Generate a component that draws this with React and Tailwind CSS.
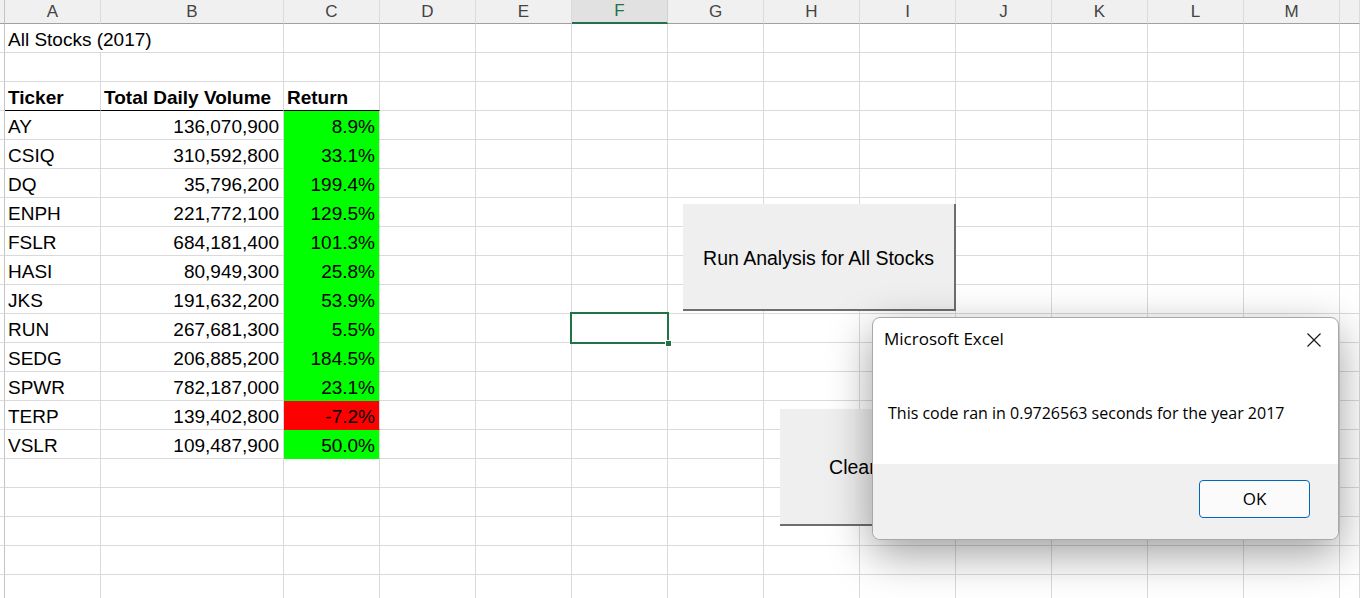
import React from 'react';

const COLS = ['A', 'B', 'C', 'D', 'E', 'F', 'G', 'H', 'I', 'J', 'K', 'L', 'M', ''];

const STOCKS = [
  ['AY', '136,070,900', '8.9%'],
  ['CSIQ', '310,592,800', '33.1%'],
  ['DQ', '35,796,200', '199.4%'],
  ['ENPH', '221,772,100', '129.5%'],
  ['FSLR', '684,181,400', '101.3%'],
  ['HASI', '80,949,300', '25.8%'],
  ['JKS', '191,632,200', '53.9%'],
  ['RUN', '267,681,300', '5.5%'],
  ['SEDG', '206,885,200', '184.5%'],
  ['SPWR', '782,187,000', '23.1%'],
  ['TERP', '139,402,800', '-7.2%'],
  ['VSLR', '109,487,900', '50.0%'],
];

// rows 1..20 of the sheet
const ROWS = [
  { kind: 'title', a: 'All Stocks (2017)' },
  { kind: 'empty' },
  { kind: 'head', a: 'Ticker', b: 'Total Daily Volume', c: 'Return' },
  ...STOCKS.map(([a, b, c]) => ({ kind: c.startsWith('-') ? 'neg' : 'pos', a, b, c })),
  { kind: 'empty' },
  { kind: 'empty' },
  { kind: 'empty' },
  { kind: 'empty' },
  { kind: 'empty' },
];

const grid = 'border-r border-b border-[#dadada]';

function HeaderRow() {
  return (
    <>
      <div className="h-[24px] border-r border-b border-r-[#c4c4c4] border-b-[#a0a0a0] bg-[#f0f0f0]" />
      {COLS.map((c, i) =>
        c === 'F' ? (
          <div
            key={i}
            className="h-[24px] flex items-center justify-center border-r border-r-[#d0d0d0] border-b-2 border-b-[#217346] bg-[#e1e1e1] text-[#217346] text-[17px]"
          >
            {c}
          </div>
        ) : (
          <div
            key={i}
            className="h-[24px] flex items-center justify-center border-r border-b border-r-[#dcdcdc] border-b-[#a0a0a0] bg-[#f0f0f0] text-[#444444] text-[17px]"
          >
            {c}
          </div>
        )
      )}
    </>
  );
}

function SheetRow({ row }) {
  const { kind, a, b, c } = row;

  let cellA = `h-[29px] px-[3px] pt-[4px] flex items-center whitespace-nowrap ${grid}`;
  let cellB = `h-[29px] px-[4px] pt-[4px] flex items-center justify-end whitespace-nowrap ${grid}`;
  let cellC = `h-[29px] px-[4px] pt-[4px] flex items-center justify-end whitespace-nowrap ${grid}`;

  if (kind === 'title') {
    cellA = 'h-[29px] px-[3px] pt-[4px] flex items-center whitespace-nowrap overflow-visible relative z-10 border-b border-[#dadada]';
  }
  if (kind === 'head') {
    cellA = 'h-[29px] px-[3px] pt-[4px] flex items-center whitespace-nowrap font-bold border-r border-r-[#dadada] border-b border-b-black';
    cellB = 'h-[29px] px-[3px] pt-[4px] flex items-center whitespace-nowrap font-bold border-r border-r-[#dadada] border-b border-b-black';
    cellC = 'h-[29px] px-[3px] pt-[4px] flex items-center whitespace-nowrap font-bold border-r border-r-[#dadada] border-b border-b-black';
  }
  if (kind === 'pos') {
    cellC = 'h-[29px] px-[4px] pt-[4px] flex items-center justify-end bg-[#00ff00] border-r border-r-[#dadada] border-b border-b-[#00ff00]';
  }
  if (kind === 'neg') {
    cellC = 'h-[29px] px-[4px] pt-[4px] flex items-center justify-end bg-[#ff0000] border-r border-r-[#dadada] border-b border-b-[#ff0000]';
  }

  return (
    <>
      <div className="h-[29px] border-r border-b border-r-[#c4c4c4] border-b-[#dadada]" />
      <div className={cellA}>{a}</div>
      <div className={cellB}>{b}</div>
      <div className={cellC}>{c}</div>
      {Array.from({ length: 11 }).map((_, i) => (
        <div key={i} className={`h-[29px] ${grid}`} />
      ))}
    </>
  );
}

const CloseIcon = () => (
  <svg width="16" height="16" viewBox="0 0 16 16" fill="none" stroke="#1a1a1a" strokeWidth="1.2">
    <path d="M1.5 1.5 L14.5 14.5 M14.5 1.5 L1.5 14.5" />
  </svg>
);

export default function App() {
  return (
    <div className="relative w-[1360px] h-[598px] overflow-hidden bg-white text-black font-['Liberation_Sans',Arial,sans-serif] text-[19px]">
      {/* worksheet grid */}
      <div className="grid grid-cols-[5px_96px_183px_repeat(11,96px)_1fr]">
        <HeaderRow />
        {ROWS.map((row, i) => (
          <SheetRow key={i} row={row} />
        ))}
      </div>

      {/* active cell F11 */}
      <div className="absolute left-[570px] top-[312px] w-[99px] h-[32px] border-2 border-[#217346]">
        <div className="absolute right-[-5px] bottom-[-5px] w-[7px] h-[7px] bg-[#217346] border border-white" />
      </div>

      {/* form buttons */}
      <div className="absolute left-[683px] top-[204px] w-[273px] h-[107px] pt-[5px] flex items-center justify-center bg-[#efefef] border-r-2 border-b-2 border-[#6e6e6e] text-[19.5px]">
        Run Analysis for All Stocks
      </div>
      <div className="absolute left-[780px] top-[409px] w-[245px] h-[117px] pt-[3px] flex items-center justify-center bg-[#efefef] border-r-2 border-b-2 border-[#6e6e6e] text-[19.5px]">
        Clear Worksheet
      </div>

      {/* message box */}
      <div className="absolute left-[872px] top-[317px] w-[467px] h-[223px] flex flex-col rounded-[8px] border border-[#a8a8a8] bg-white shadow-[0_14px_44px_rgba(0,0,0,0.38)] font-['Open_Sans',sans-serif] text-black">
        <div className="flex-1 flex flex-col">
          <div className="flex items-start justify-between pl-[11px] pr-[16px] pt-[9px]">
            <span className="text-[17px] leading-[24px]">Microsoft Excel</span>
            <span className="mt-[5px]">
              <CloseIcon />
            </span>
          </div>
          <p className="pl-[15px] mt-[50px] text-[16px] leading-[24px]">
            This code ran in 0.9726563 seconds for the year 2017
          </p>
        </div>
        <div className="h-[75px] flex items-start justify-end pr-[28px] pt-[16px] bg-[#f0f0f0] rounded-b-[8px]">
          <button className="w-[111px] h-[38px] rounded-[4px] border border-[#0067c0] bg-[#fbfbfb] text-[17px] text-black">
            OK
          </button>
        </div>
      </div>
    </div>
  );
}
